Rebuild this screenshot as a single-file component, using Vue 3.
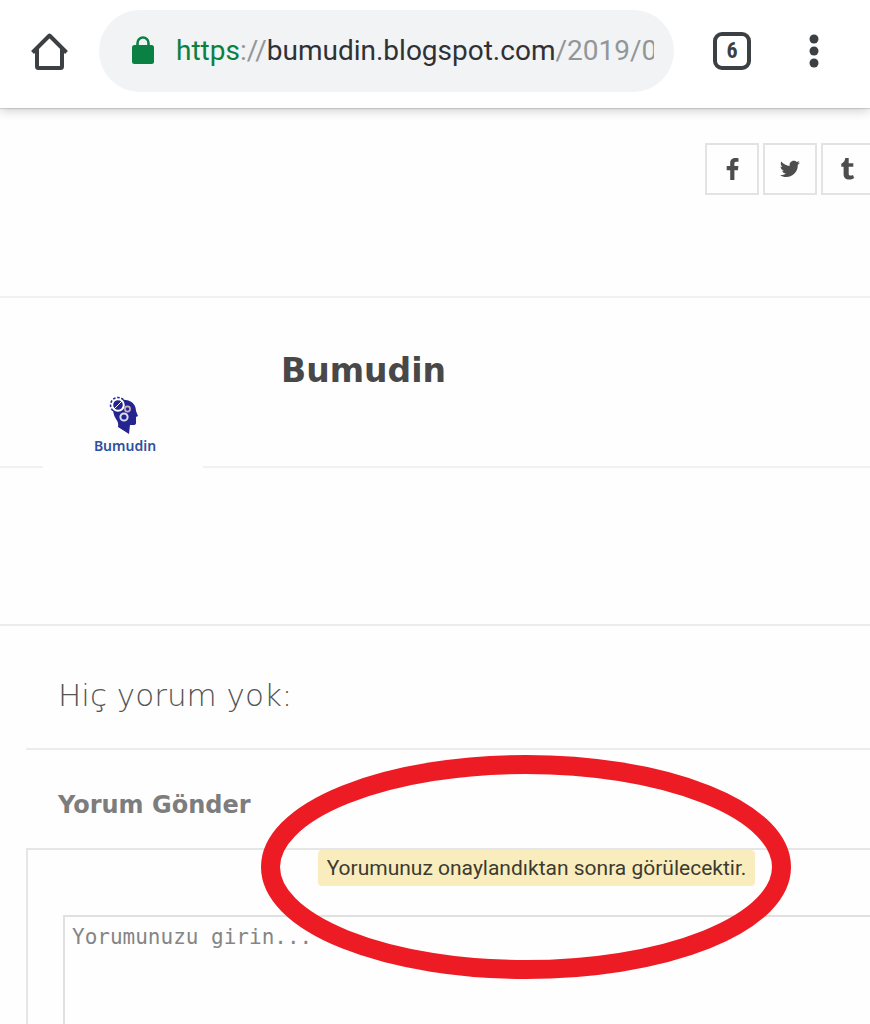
<template>
  <div class="page">
    <header class="toolbar">
      <button type="button" class="icon-btn" aria-label="Ana sayfa">
        <svg width="38" height="38" viewBox="0 0 38 38" fill="none">
          <path d="M7 20v14.500q0 1.500 1.500 1.500h22q1.500 0 1.500-1.500V20M2.500 20.500 19.500 3.500l17 17M7 20v-3M32 20v-3" stroke="#3c4043" stroke-width="4" stroke-linejoin="round" />
        </svg>
      </button>
      <button type="button" class="omnibox">
        <svg class="lock" width="24" height="30" viewBox="0 0 24 30">
          <rect x="1" y="9" width="22" height="19" rx="2.500" fill="#0b8043" />
          <path d="M6.500 10V7a5.500 5.500 0 0 1 11 0V10" fill="none" stroke="#0b8043" stroke-width="2.600" />
        </svg>
        <span class="url"><span class="scheme">https</span><span class="muted">://</span>bumudin.blogspot.com<span class="muted">/2019/0</span></span>
      </button>
      <button type="button" class="tab-count">{{ openTabs }}</button>
      <button type="button" class="icon-btn menu-btn" aria-label="Menü">
        <svg width="10" height="34" viewBox="0 0 10 34" fill="#3c4043">
          <circle cx="5" cy="5" r="4.500" />
          <circle cx="5" cy="17" r="4.500" />
          <circle cx="5" cy="29" r="4.500" />
        </svg>
      </button>
    </header>

    <main class="content">
      <nav class="share">
        <a v-for="item in shareLinks" :key="item.name" href="#" class="share-link" :aria-label="item.name">
          <svg width="24" height="24" viewBox="0 0 24 24" fill="#4d4d4d">
            <path :d="item.path" />
          </svg>
        </a>
      </nav>

      <section class="author">
        <div class="author-head">
          <div class="avatar">
            <svg width="32" height="40" viewBox="0 0 32 40">
              <path d="M4 8C7 3 13 3 17 4c7 1 10 6 10 11l2 5-2 1v6q0 2-3 2h-3l-1 9-11-7q1-4-2-8-4-6-3-15z" fill="#25258f" />
              <circle cx="9" cy="9" r="7" fill="none" stroke="#25258f" stroke-width="2.500" stroke-dasharray="2.400 1.600" />
              <circle cx="9" cy="9" r="5.800" fill="#25258f" stroke="#fff" stroke-width="2" />
              <path d="m5 13 8-8" stroke="#fff" stroke-width="1" />
              <circle cx="18.500" cy="13" r="2.600" fill="none" stroke="#d0b5b8" stroke-width="1.600" />
              <circle cx="15" cy="21" r="3.600" fill="none" stroke="#dcdcf5" stroke-width="2" />
            </svg>
            <span class="avatar-name">Bumudin</span>
          </div>
          <h2 class="author-name">Bumudin</h2>
        </div>
      </section>

      <section class="comments">
        <h3 class="comments-title">Hiç yorum yok:</h3>
        <label class="form-title" for="comment">Yorum Gönder</label>
        <form class="comment-form" @submit.prevent>
          <p class="notice">Yorumunuz onaylandıktan sonra görülecektir.</p>
          <textarea id="comment" v-model="comment" class="comment-input" placeholder="Yorumunuzu girin..."></textarea>
          <!-- Red ring around the notice -->
          <svg class="highlight" width="530" height="224" viewBox="0 0 530 224" aria-hidden="true">
            <ellipse cx="265" cy="112" rx="255.500" ry="102.500" fill="none" stroke="#ed1c24" stroke-width="19" />
          </svg>
        </form>
      </section>
    </main>
  </div>
</template>

<script setup>
import { ref } from 'vue';

const openTabs = ref(6);
const comment = ref('');

const shareLinks = [
  {
    name: 'Facebook',
    path: 'M18.500 1.200v3.600h-2.200c-1.600 0-1.900.8-1.900 1.900v2.400h4l-.5 4.100h-3.500V23H10.200v-9.800H6.700V9.100h3.500v-3C10.200 2.600 12.300 1 15.500 1c1.500 0 2.700.1 3 .2z'
  },
  {
    name: 'Twitter',
    path: 'M22 5.500c-.6.900-1.300 1.600-2.200 2.200.2 6.500-4.600 12.300-11.600 12.300-2.300 0-4.400-.6-6.200-1.800 2.100.2 4.200-.4 5.900-1.700-1.800 0-3.300-1.200-3.800-2.800.6.100 1.200.1 1.800-.1-1.900-.4-3.300-2.100-3.300-4.100.6.300 1.200.5 1.900.5C2.800 8.900 2.200 6.500 3.300 4.600c2 2.500 5 4.100 8.400 4.300C11.100 6.200 13.100 3.700 15.800 3.700c1.200 0 2.200.5 3 1.300.9-.2 1.800-.5 2.600-1-.3.900-.9 1.700-1.700 2.200.8-.1 1.600-.3 2.300-.7z'
  },
  {
    name: 'Tumblr',
    path: 'M17 17.900l1.100 3.200c-.8.900-2.500 1.500-4.500 1.500-4.400 0-6-2.700-6-5.400V9.700H5.300V6.700c3-1.100 3.700-3.800 3.900-5.400 0-.2.100-.3.300-.3h3.200v5.300h4.600v3.400h-4.600v7c0 1.100.5 1.900 1.900 1.800.9 0 1.800-.3 2.400-.6z'
  }
];
</script>

<style>
body {
  margin: 0;
  background: #fefefe;
}
</style>

<style scoped>
.page {
  display: flex;
  flex-direction: column;
  min-height: 100vh;
  overflow: hidden;
  background: #fefefe;
  font-family: "DejaVu Sans", sans-serif;
}

button {
  padding: 0;
  border: none;
  background: none;
}

.toolbar {
  display: flex;
  align-items: center;
  padding: 10px 51px 16px 30px;
  background: #fff;
  box-shadow: 0 1px 1px rgba(0, 0, 0, 0.12), 0 3px 10px rgba(0, 0, 0, 0.18);
  font-family: Roboto, sans-serif;
}

.icon-btn {
  display: flex;
}

.omnibox {
  flex: 1;
  min-width: 0;
  height: 82px;
  margin: 0 39px 0 31px;
  padding: 0 20px 0 32px;
  display: flex;
  align-items: center;
  gap: 21px;
  border-radius: 41px;
  background: #f1f3f4;
}

.lock {
  flex: none;
}

.url {
  flex: 1;
  min-width: 0;
  overflow: hidden;
  white-space: nowrap;
  text-align: left;
  font-family: Roboto, sans-serif;
  font-size: 28px;
  line-height: 38px;
  color: #303134;
}

.scheme {
  color: #0b8043;
}

.muted {
  color: #939699;
}

.tab-count {
  box-sizing: border-box;
  width: 38px;
  height: 38px;
  border: 4px solid #3c4043;
  border-radius: 9px;
  font-family: "Roboto Condensed", Roboto, sans-serif;
  font-size: 22px;
  font-weight: 700;
  line-height: 28px;
  color: #3c4043;
}

.menu-btn {
  margin-left: 58px;
}

.content {
  flex: 1;
  display: flex;
  flex-direction: column;
}

.share {
  display: flex;
  justify-content: flex-end;
  gap: 4px;
  margin-right: -5px;
  padding: 35px 0 101px;
  border-bottom: 2px solid #f1f1f1;
}

.share-link {
  box-sizing: border-box;
  display: flex;
  align-items: center;
  justify-content: center;
  width: 54px;
  height: 52px;
  border: 2px solid #e3e3e3;
}

.author {
  padding-bottom: 156px;
  border-bottom: 2px solid #ececec;
}

.author-head {
  position: relative;
  padding: 52px 0 74px 281px;
  border-bottom: 2px solid #f1f1f1;
}

/* The avatar hangs over the line below the name */
.avatar {
  position: absolute;
  top: 48px;
  left: 43px;
  box-sizing: border-box;
  width: 160px;
  height: 160px;
  padding-left: 4px;
  display: flex;
  flex-direction: column;
  align-items: center;
  justify-content: center;
  background: #fefefe;
}

.avatar-name {
  font-family: "Noto Sans", sans-serif;
  font-size: 14px;
  font-weight: 600;
  line-height: 20px;
  color: #2f4f9f;
}

.author-name {
  margin: 0;
  font-size: 33px;
  font-weight: 700;
  line-height: 42px;
  color: #484848;
}

.comments {
  flex: 1;
  display: flex;
  flex-direction: column;
  margin-left: 26px;
}

.comments-title {
  margin: 0;
  padding: 48px 32px 32px;
  border-bottom: 2px solid #ececec;
  font-size: 31px;
  font-weight: 200;
  line-height: 42px;
  color: #555;
}

.form-title {
  padding: 38px 32px 26px;
  font-size: 24px;
  font-weight: 700;
  line-height: 34px;
  color: #7d7d7d;
}

/* The form is wider than the screen and runs off its right edge */
.comment-form {
  position: relative;
  flex: 1;
  display: flex;
  flex-direction: column;
  margin-right: -140px;
  padding-left: 35px;
  border: solid #e6e6e6;
  border-width: 2px 0 0 2px;
}

.notice {
  align-self: center;
  margin: 0 0 29px;
  padding: 0 9px;
  border-radius: 4px;
  background: #f9edbe;
  font-family: Roboto, sans-serif;
  font-size: 21px;
  line-height: 36px;
  color: #3d3a30;
}

.comment-input {
  box-sizing: border-box;
  flex: 1;
  min-height: 100px;
  padding: 7px;
  border: solid #e0e0e0;
  border-width: 2px 0 0 2px;
  border-radius: 0;
  outline: none;
  resize: none;
  background: transparent;
  font-family: "DejaVu Sans Mono", monospace;
  font-size: 21px;
  line-height: 26px;
  color: #333;
}

.comment-input::placeholder {
  color: #858585;
  opacity: 1;
}

.highlight {
  position: absolute;
  top: -95px;
  left: 233px;
  pointer-events: none;
}
</style>
